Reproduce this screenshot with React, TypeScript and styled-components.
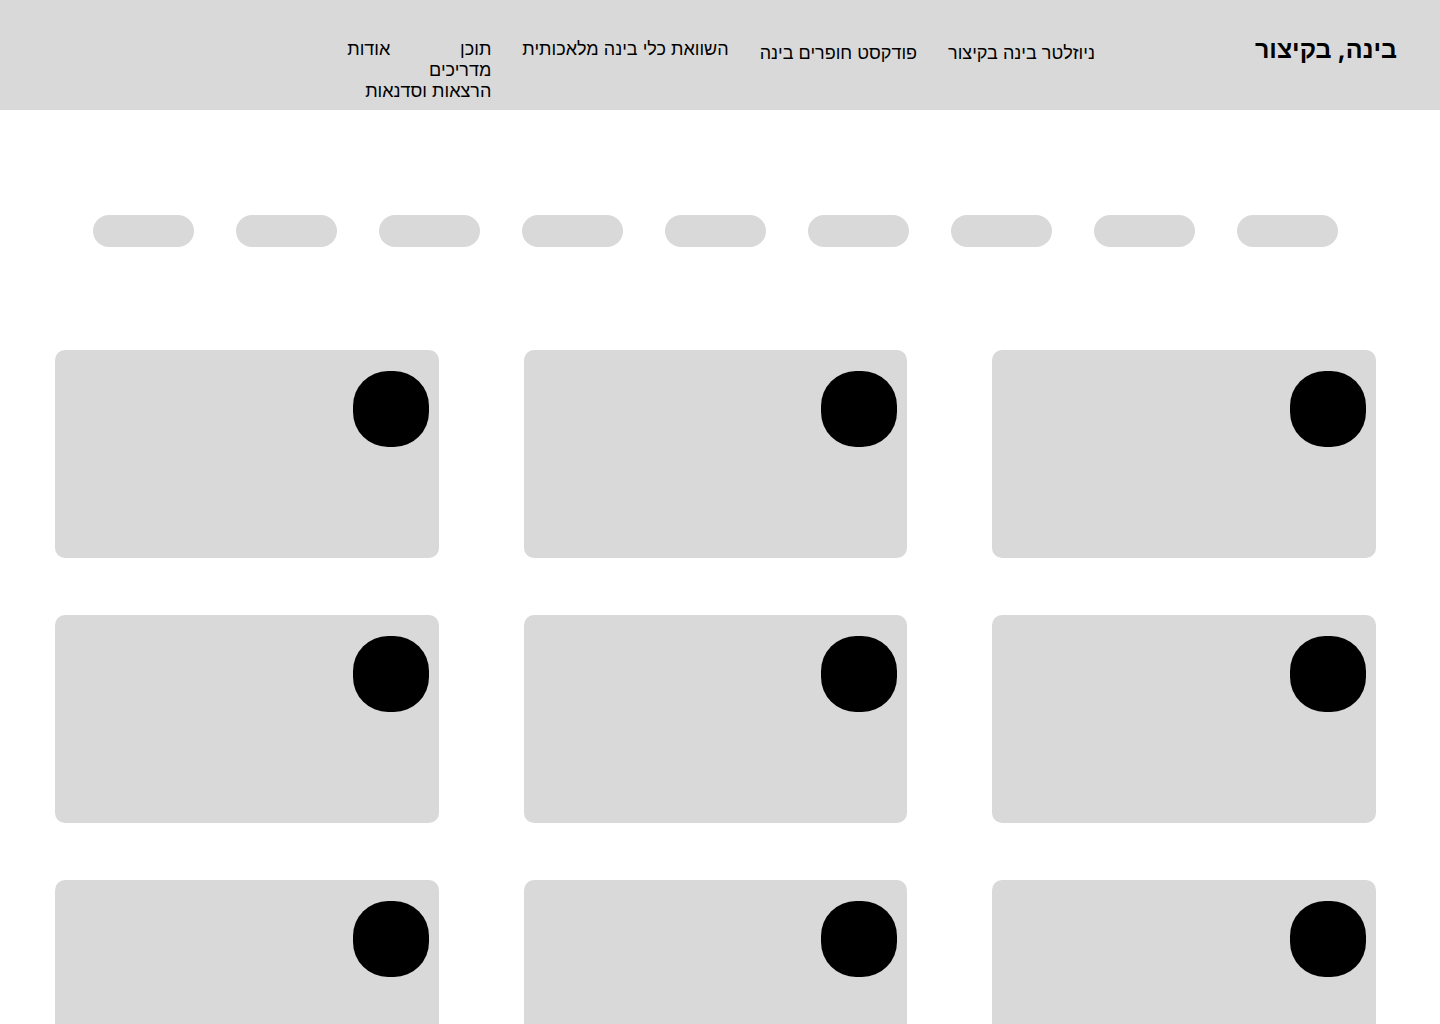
import React from "react";
import styled, { createGlobalStyle } from "styled-components";

const GlobalStyle = createGlobalStyle`
  *, *::before, *::after { box-sizing: border-box; }
  body {
    margin: 0;
    background: #fff;
    color: #000;
    font-family: Inter, "Liberation Sans", sans-serif;
  }
`;

const Page = styled.div`
  direction: rtl;
`;

const Header = styled.header`
  display: flex;
  align-items: flex-start;
  min-height: 110px;
  padding: 31px 43px 0;
  background: #d9d9d9;
`;

const Logo = styled.a`
  color: inherit;
  font-size: 25px;
  font-weight: 700;
  line-height: 36px;
  text-decoration: none;
  white-space: nowrap;
`;

const Nav = styled.nav`
  margin-inline-start: 160px;
  padding-top: 7px;
`;

const Menu = styled.ul`
  display: flex;
  align-items: flex-start;
  gap: 31px;
  margin: 0;
  padding: 0;
  list-style: none;
`;

const MenuItem = styled.li<{ $low?: boolean; $narrow?: boolean }>`
  width: ${(p) => (p.$narrow ? "70px" : "auto")};
  padding-top: ${(p) => (p.$low ? "4px" : "0")};
`;

const SubMenu = styled.ul`
  margin: 0;
  padding: 0;
  list-style: none;
`;

const MenuLink = styled.a`
  display: block;
  color: inherit;
  font-size: 18px;
  line-height: 21px;
  text-decoration: none;
  white-space: nowrap;
`;

const Filters = styled.div`
  display: flex;
  justify-content: space-between;
  padding: 105px 102px 0 93px;
`;

const Pill = styled.button`
  width: 101px;
  height: 32px;
  padding: 0;
  border: 0;
  border-radius: 16px;
  background: #d9d9d9;
  cursor: pointer;
`;

const Cards = styled.main`
  display: grid;
  grid-template-columns: repeat(3, 1fr);
  gap: 57px 85px;
  padding: 103px 64px 57px 55px;
`;

const Card = styled.article`
  display: flex;
  align-items: flex-start;
  height: 208px;
  padding: 21px 10px;
  border-radius: 10px;
  background: #d9d9d9;
`;

const Avatar = styled.div`
  width: 76px;
  height: 76px;
  border-radius: 35px;
  background: #000;
`;

type Entry = { label: string; low?: boolean; children?: string[] };

const entries: Entry[] = [
  { label: "ניוזלטר בינה בקיצור", low: true },
  { label: "פודקסט חופרים בינה", low: true },
  { label: "השוואת כלי בינה מלאכותית" },
  { label: "תוכן", children: ["מדריכים", "הרצאות וסדנאות"] },
  { label: "אודות" },
];

const filters = Array.from({ length: 9 }, (_, i) => i);
const cards = Array.from({ length: 9 }, (_, i) => i);

export default function App() {
  return (
    <Page lang="he">
      <GlobalStyle />
      <Header>
        <Logo href="#">בינה, בקיצור</Logo>
        <Nav>
          <Menu>
            {entries.map((entry) => (
              <MenuItem key={entry.label} $low={entry.low} $narrow={!!entry.children}>
                <MenuLink href="#">{entry.label}</MenuLink>
                {entry.children && (
                  <SubMenu>
                    {entry.children.map((child) => (
                      <li key={child}>
                        <MenuLink href="#">{child}</MenuLink>
                      </li>
                    ))}
                  </SubMenu>
                )}
              </MenuItem>
            ))}
          </Menu>
        </Nav>
      </Header>
      <Filters>
        {filters.map((i) => (
          <Pill key={i} type="button" />
        ))}
      </Filters>
      <Cards>
        {cards.map((i) => (
          <Card key={i}>
            <Avatar />
          </Card>
        ))}
      </Cards>
    </Page>
  );
}
